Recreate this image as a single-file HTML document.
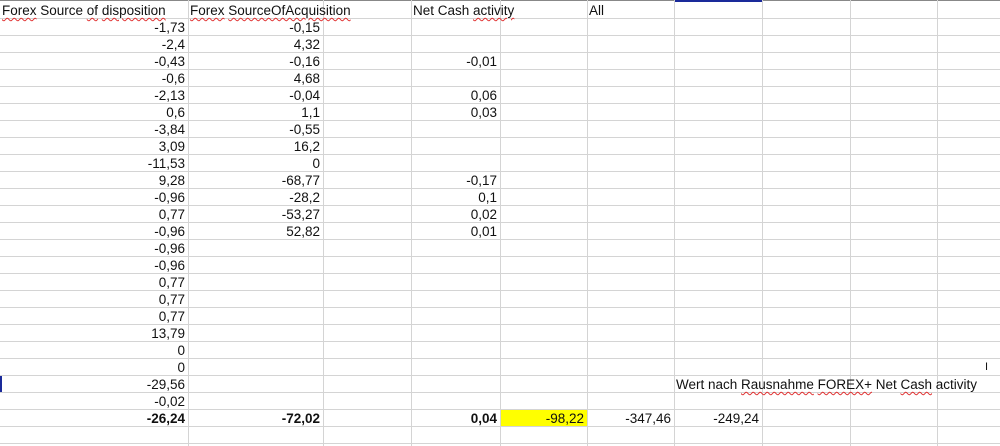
<!DOCTYPE html>
<html><head><style>
body{margin:0;width:1000px;height:446px;overflow:hidden;background:#fff;font-family:"Liberation Sans",sans-serif;font-size:13.5px;color:#111;position:relative}
.h{position:absolute;left:0;width:1000px;height:1px;background:#d4d4d4}
.v{position:absolute;top:0;height:446px;width:1px;background:#d4d4d4}
.c{position:absolute;height:17px;line-height:19px;white-space:nowrap}
.r{text-align:right}
.b{font-weight:bold}
.u{text-decoration:underline wavy #e03030;text-decoration-thickness:1px;text-underline-offset:2px}
</style></head><body>
<div style="position:absolute;left:0;top:0;width:1000px;height:1px;background:#888"></div>
<div style="position:absolute;left:674px;top:0;width:88px;height:2px;background:#1a2a9a"></div>
<div style="position:absolute;left:500px;top:409px;width:87px;height:17px;background:#ffff00"></div>
<div style="position:absolute;left:0;top:375px;width:2px;height:17px;background:#1a2a9a"></div>
<div id="g"></div>
<div class="c" style="left:2px;top:1px"><span class="u">Forex</span> Source <span class="u">of</span> <span class="u">disposition</span></div>
<div class="c" style="left:190px;top:1px"><span class="u">Forex</span> <span class="u">SourceOfAcquisition</span></div>
<div class="c" style="left:413px;top:1px">Net Cash <span class="u">activity</span></div>
<div class="c" style="left:589px;top:1px">All</div>
<div class="c" style="left:676px;top:375px">Wert nach <span class="u">Rausnahme</span> <span class="u">FOREX+</span> Net <span class="u">Cash</span> activity</div>
<div class="c" style="left:985px;top:358px;font-size:11px">I</div>
<div id="d"></div>
<script>
var cols=[0,188,323,411,500,587,674,762,850,937];
var g='';
for(var i=1;i<cols.length;i++)g+='<div class="v" style="left:'+cols[i]+'px"></div>';
for(var y=18;y<446;y+=17)g+='<div class="h" style="top:'+y+'px"></div>';
document.getElementById('g').innerHTML=g;
var A=["-1,73","-2,4","-0,43","-0,6","-2,13","0,6","-3,84","3,09","-11,53","9,28","-0,96","0,77","-0,96","-0,96","-0,96","0,77","0,77","0,77","13,79","0","0","-29,56","-0,02"];
var B=["-0,15","4,32","-0,16","4,68","-0,04","1,1","-0,55","16,2","0","-68,77","-28,2","-53,27","52,82"];
var D={2:"-0,01",4:"0,06",5:"0,03",9:"-0,17",10:"0,1",11:"0,02",12:"0,01"};
var h='';
function cell(ci,row,t,b){var l=cols[ci],w=cols[ci+1]-l-3;h+='<div class="c r'+(b?' b':'')+'" style="left:'+l+'px;width:'+w+'px;top:'+(18+row*17)+'px">'+t+'</div>';}
A.forEach(function(t,i){cell(0,i,t)});
B.forEach(function(t,i){cell(1,i,t)});
for(var k in D)cell(3,+k,D[k]);
cell(0,23,"-26,24",1);cell(1,23,"-72,02",1);cell(3,23,"0,04",1);
cell(4,23,"-98,22");cell(5,23,"-347,46");cell(6,23,"-249,24");
document.getElementById('d').innerHTML=h;
</script>
</body></html>
